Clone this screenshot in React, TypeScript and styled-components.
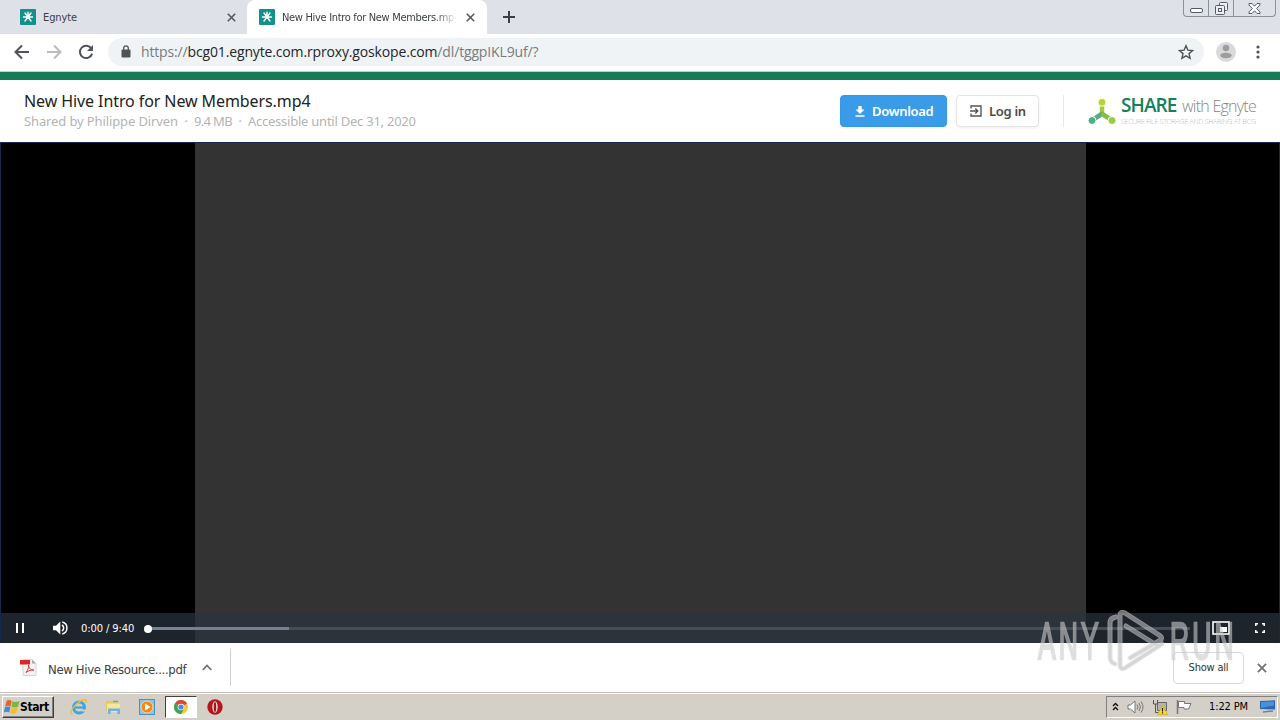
import styled, { createGlobalStyle } from 'styled-components';

const ui = '"DejaVu Sans Condensed", "DejaVu Sans", sans-serif';

function EgnyteIcon() {
  return (
    <svg width="16" height="16" viewBox="0 0 16 16">
      <rect width="16" height="16" rx="1" fill="#12908a" />
      <path
        d="M8 3.200V6M3.500 8h9M5 4l6 8M11 4l-6 8"
        stroke="#fff"
        strokeWidth="1.400"
        strokeLinecap="round"
      />
    </svg>
  );
}

function CloseIcon({ size = 9, color = '#55585c' }: { size?: number; color?: string }) {
  return (
    <svg width={size} height={size} viewBox="0 0 9 9">
      <path d="M.8.8l7.4 7.4M8.2.8L.8 8.2" stroke={color} strokeWidth="1.6" />
    </svg>
  );
}

function TabStrip() {
  return (
    <Strip>
      <Tab>
        <EgnyteIcon />
        <TabTitle $spacing="-0.1px">Egnyte</TabTitle>
        <CloseIcon />
      </Tab>
      <Tab $active>
        <EgnyteIcon />
        <TabTitle $spacing="-0.32px" $faded>
          New Hive Intro for New Members.mp4
        </TabTitle>
        <CloseIcon />
      </Tab>
      <NewTab>
        <svg width="12" height="12" viewBox="0 0 12 12">
          <path d="M6 0v12M0 6h12" stroke="#3c4043" strokeWidth="2" />
        </svg>
      </NewTab>
      <WindowButtons>
        <WindowButton $width={25}>
          <svg width="13" height="5">
            <rect x=".5" y=".5" width="12" height="4" rx="1.5" fill="#fff" stroke="#555b66" />
          </svg>
        </WindowButton>
        <WindowButton $width={25}>
          <svg width="13" height="13" fill="#eef0f3" stroke="#555b66">
            <rect x="4.500" y=".5" width="8" height="8" rx="1" />
            <rect x=".5" y="3.500" width="9" height="9" rx="1" />
            <rect x="3.500" y="6.500" width="3" height="3" />
          </svg>
        </WindowButton>
        <WindowButton $width={41}>
          <svg width="13" height="11" viewBox="0 0 13 11">
            <path
              d="M1 .5h3l2.500 2.700L9 .5h3v1.600L8.600 5.500 12 8.900v1.600H9L6.500 7.800 4 10.500H1V8.900l3.400-3.400L1 2.100z"
              fill="#fff"
              stroke="#555b66"
            />
          </svg>
        </WindowButton>
      </WindowButtons>
    </Strip>
  );
}

function Toolbar() {
  return (
    <ToolbarRow>
      <NavIcons>
        <svg width="16" height="16" viewBox="0 0 16 16" fill="none" stroke="#505357" strokeWidth="2">
          <path d="M15 8H2M8 1.500L1.500 8 8 14.500" />
        </svg>
        <svg width="16" height="16" viewBox="0 0 16 16" fill="none" stroke="#b9bbbe" strokeWidth="2">
          <path d="M1 8h13M8 1.500L14.500 8 8 14.500" />
        </svg>
        <svg width="16" height="16" viewBox="0 0 16 16">
          <path d="M13.400 4.600A6.200 6.200 0 1 0 14.100 9.600" fill="none" stroke="#505357" strokeWidth="2" />
          <path d="M15 1v6H9z" fill="#505357" />
        </svg>
      </NavIcons>
      <AddressBar>
        <svg width="10" height="13" viewBox="0 0 10 13">
          <rect x=".5" y="4.500" width="9" height="8" rx="1" fill="#505357" />
          <path d="M2.700 5V3.200a2.300 2.300 0 0 1 4.600 0V5" fill="none" stroke="#505357" strokeWidth="1.300" />
        </svg>
        <Url>
          https://<b>bcg01.egnyte.com.rproxy.goskope.com</b>/dl/tggpIKL9uf/?
        </Url>
        <svg width="16" height="16" viewBox="0 0 16 16">
          <path
            d="M8 1.700l1.900 4.400 4.700.4-3.600 3.100 1.100 4.700L8 11.800l-4.100 2.500L5 9.600 1.400 6.500l4.700-.4z"
            fill="none"
            stroke="#505357"
            strokeWidth="1.400"
          />
        </svg>
      </AddressBar>
      <svg width="20" height="20" viewBox="0 0 20 20">
        <circle cx="10" cy="10" r="10" fill="#dadada" />
        <circle cx="10" cy="6" r="3.300" fill="#9d9d9d" />
        <ellipse cx="10" cy="13.500" rx="5.700" ry="2.700" fill="#9d9d9d" />
      </svg>
      <svg width="4" height="14" fill="#505357">
        <circle cx="2" cy="2" r="1.600" />
        <circle cx="2" cy="7" r="1.600" />
        <circle cx="2" cy="12" r="1.600" />
      </svg>
    </ToolbarRow>
  );
}

function ShareLogo() {
  return (
    <Logo>
      <svg width="28" height="27" viewBox="0 0 28 27">
        <path d="M14 8v9" stroke="#a5cb45" strokeWidth="4.500" />
        <path d="M14.500 15.500L6 21" stroke="#5eaa77" strokeWidth="4.500" />
        <path d="M13.500 15.500L22 21" stroke="#86bd45" strokeWidth="4.500" />
        <g stroke="#fff">
          <circle cx="14" cy="4.300" r="4" fill="#b9d532" />
          <circle cx="4" cy="22.500" r="4" fill="#4fae88" />
          <circle cx="24" cy="22.500" r="4" fill="#9acb3c" />
        </g>
      </svg>
      <div>
        <LogoName>
          <b>SHARE</b>
          <span>with Egnyte</span>
        </LogoName>
        <LogoTagline>SECURE FILE STORAGE AND SHARING AT BCG</LogoTagline>
      </div>
    </Logo>
  );
}

function FileHeader() {
  return (
    <Header>
      <FileInfo>
        <FileName>New Hive Intro for New Members.mp4</FileName>
        <FileMeta>
          <MetaText $spacing="-0.12px">Shared by Philippe Dirven</MetaText>
          <i>·</i>
          <MetaText $spacing="-0.65px">9.4 MB</MetaText>
          <i>·</i>
          <MetaText $spacing="-0.24px">Accessible until Dec 31, 2020</MetaText>
        </FileMeta>
      </FileInfo>
      <HeaderButton $primary>
        <svg width="10" height="11" viewBox="0 0 10 11" fill="#fff">
          <path d="M3.300 0h3.400v3.500H9.500L5 8 .5 3.500h2.800zM.5 9.300h9v1.400h-9z" />
        </svg>
        Download
      </HeaderButton>
      <HeaderButton>
        <svg width="12" height="12" viewBox="0 0 12 12" fill="none" stroke="#555" strokeWidth="1.400">
          <path d="M1 3.500V1h10v10H1V8.500M0 6h7.500M5.300 3.500L7.800 6 5.300 8.500" />
        </svg>
        Log in
      </HeaderButton>
      <Divider />
      <ShareLogo />
    </Header>
  );
}

function Player() {
  return (
    <Video>
      <Frame />
      <Controls>
        <svg width="8" height="10" fill="#fff">
          <rect width="2" height="10" />
          <rect x="6" width="2" height="10" />
        </svg>
        <svg width="15" height="14" viewBox="0 0 15 14">
          <path d="M0 4.700h3L7.300.5v13L3 9.300H0z" fill="#fff" />
          <path d="M9 4a3.500 3.500 0 0 1 0 6M9.300 1a6.200 6.200 0 0 1 0 12" fill="none" stroke="#fff" strokeWidth="1.500" />
        </svg>
        <Time>0:00 / 9:40</Time>
        <Track>
          <Buffered />
          <Knob />
        </Track>
        <svg width="18" height="14">
          <rect x="1" y="1" width="16" height="12" fill="none" stroke="#fff" strokeWidth="1.600" />
          <rect x="8" y="6" width="7" height="5" fill="#fff" />
        </svg>
        <svg width="10" height="10" fill="none" stroke="#fff" strokeWidth="1.500">
          <path d="M.8 3V.8H3M7 .8h2.200V3M9.200 7v2.200H7M3 9.200H.8V7" />
        </svg>
      </Controls>
    </Video>
  );
}

function DownloadShelf() {
  return (
    <Shelf>
      <ShelfItem>
        <svg width="17" height="17" viewBox="0 0 17 17">
          <path d="M3 .5h9l4 4v12H3z" fill="#f3f3f3" stroke="#d4d4d4" />
          <path d="M12 .5v4h4" fill="#aaa" />
          <rect y="1" width="10" height="4.500" fill="#dc2626" />
          <path d="M6 13.500C8 11 9 8 8.500 6c.5 4 3 5.500 5.500 5-3-.5-5 .5-8 2.500z" fill="none" stroke="#df3b33" />
        </svg>
        <ShelfName>New Hive Resource....pdf</ShelfName>
        <svg width="10" height="7" viewBox="0 0 10 7">
          <path d="M.8 6L5 1.500 9.200 6" fill="none" stroke="#6c6f73" strokeWidth="1.700" />
        </svg>
      </ShelfItem>
      <ShowAll>Show all</ShowAll>
      <CloseIcon size={10} color="#707276" />
    </Shelf>
  );
}

function Taskbar() {
  return (
    <TaskbarRow>
      <StartButton>
        <svg width="16" height="16" viewBox="0 0 16 16">
          <path d="M2.500 2C4 .5 6 1 7.700 2L6.600 7.500C5 6.500 3 6.500 1.200 7.700z" fill="#e8642c" />
          <path d="M8.500 2.300c2 1 4.500.8 7-.3l-1.500 5.800c-2.500 1-4.500 1-6.500 0z" fill="#77b743" />
          <path d="M1 8.300c2-1.200 3.800-1 5.400-.2l-1.200 5.400C3.500 12.500 1.800 12.500-.2 13.700z" fill="#408cd2" />
          <path d="M7.300 8.500c2 1 4.200 1 6.500 0l-1.500 5.700c-2 1-4.300.9-6.200-.1z" fill="#f4be32" />
        </svg>
        Start
      </StartButton>
      <TaskIcon>
        <svg width="18" height="18" viewBox="0 0 18 18">
          <circle cx="9" cy="9.500" r="5.500" fill="none" stroke="#3fa6df" strokeWidth="3" />
          <path d="M5 9.500h10" stroke="#3fa6df" strokeWidth="2.200" />
          <path d="M11.500 11.500h5v2h-5z" fill="#d4d0c8" />
          <path d="M2.500 15.500C-1 17 1 11 6.500 6S18 0 16 5" fill="none" stroke="#e9bd3a" strokeWidth="1.300" />
        </svg>
      </TaskIcon>
      <TaskIcon>
        <svg width="17" height="16" viewBox="0 0 17 16">
          <path d="M1 2h5l1 1.500h8V13H1z" fill="#e7c75b" />
          <path d="M2 4.500h13V13H2z" fill="#f8e59a" />
          <path d="M3 15V9.500h12V15h-2.500v-3h-7v3z" fill="#66b5e3" />
          <path d="M8 2.500h5" stroke="#6fb663" strokeWidth="1.500" />
        </svg>
      </TaskIcon>
      <TaskIcon>
        <svg width="16" height="16" viewBox="0 0 16 16">
          <rect x=".5" y=".5" width="15" height="15" fill="#8ac2e8" stroke="#4b91c7" />
          <circle cx="8" cy="8" r="6" fill="#f08a1d" stroke="#f7d9a8" />
          <path d="M6 4.500L11.500 8 6 11.500z" fill="#fff" />
        </svg>
      </TaskIcon>
      <TaskIcon $active>
        <svg width="14" height="14" viewBox="0 0 14 14">
          <circle cx="7" cy="7" r="7" fill="#f6c730" />
          <path d="M7 7L.9 3.500A7 7 0 0 1 13.100 3.500z" fill="#dc4638" />
          <path d="M.9 3.500A7 7 0 0 0 7 14l3-5.300L7 7z" fill="#38a557" />
          <circle cx="7" cy="7" r="3.300" fill="#fff" />
          <circle cx="7" cy="7" r="2.600" fill="#4587ed" />
        </svg>
      </TaskIcon>
      <TaskIcon>
        <svg width="16" height="16" viewBox="0 0 16 16">
          <circle cx="8" cy="8" r="7.700" fill="#b5161b" />
          <ellipse cx="8" cy="8" rx="2.700" ry="5.800" fill="#f3dcdc" />
          <ellipse cx="8" cy="8" rx="1.200" ry="5" fill="#a11418" />
        </svg>
      </TaskIcon>
      <Tray>
        <svg width="7" height="9" fill="none" stroke="#111" strokeWidth="1.400">
          <path d="M1 4l2.500-2.500L6 4M1 8l2.500-2.500L6 8" />
        </svg>
        <svg width="17" height="14" viewBox="0 0 17 14" fill="none" stroke="#777">
          <path d="M1 5h2.500L8 1v12L3.500 9H1z" fill="#fff" />
          <path d="M10 4.500q2 2.500 0 5M12 3q3 4 0 8M14 1.500q4 5.500 0 11" />
        </svg>
        <svg width="16" height="16" viewBox="0 0 16 16">
          <path d="M5.500 3.500h9v8h-9z" fill="#b4b4b0" stroke="#666" />
          <path d="M1.500 1v4h4V1M3.500 5v8.500h4" fill="none" stroke="#555" />
          <path d="M10.500 6.500l5 9h-10z" fill="#f7dc25" stroke="#c3a30f" strokeWidth=".6" />
          <path d="M10.500 9v3.500M10.500 13.300v1.200" stroke="#222" strokeWidth="1.200" />
        </svg>
        <svg width="16" height="14" viewBox="0 0 16 14">
          <path d="M1.500 0v14" stroke="#777" strokeWidth="1.500" />
          <path d="M2.500 1.500h6v2h6.500L12.500 9H8V7.500H2.500z" fill="#fff" stroke="#777" />
        </svg>
        <Clock>1:22 PM</Clock>
        <svg width="16" height="13" viewBox="0 0 16 13">
          <path d="M0 1l15-.7v9.200L0 9z" fill="#2868b4" />
          <path d="M1 2l13-.6v4L1 8z" fill="#4b91d5" />
          <path d="M3 12l10-1" stroke="#5c87b4" strokeWidth="1.500" />
        </svg>
      </Tray>
    </TaskbarRow>
  );
}

function Watermark() {
  return (
    <WatermarkLayer>
      <WatermarkWord>ANY</WatermarkWord>
      <svg width="62" height="62" viewBox="0 0 62 62" fill="none" strokeLinecap="round" strokeLinejoin="round">
        <g stroke="#d9d9d9" strokeWidth="5">
          <path d="M10 7Q4 8 4 13v34q0 5 5 7" />
          <path d="M14 49V6q0-5 5-3l34 22q5 3 0 6L24 48" />
          <path d="M20 16l32 20M14 49v7q1 4 5 2l37-24" />
        </g>
        <g stroke="#bbb" strokeWidth="3">
          <path d="M10 7Q4 8 4 13v34q0 5 5 7" />
          <path d="M14 49V6q0-5 5-3l34 22q5 3 0 6L24 48" />
          <path d="M20 16l32 20M14 49v7q1 4 5 2l37-24" />
        </g>
      </svg>
      <WatermarkWord>RUN</WatermarkWord>
    </WatermarkLayer>
  );
}

export default function App() {
  return (
    <Screen>
      <GlobalStyle />
      <TabStrip />
      <Toolbar />
      <FileHeader />
      <Player />
      <DownloadShelf />
      <Taskbar />
      <Watermark />
    </Screen>
  );
}

const GlobalStyle = createGlobalStyle`
  * {
    box-sizing: border-box;
  }

  body {
    margin: 0;
    overflow: hidden;
  }

  svg {
    display: block;
    flex: none;
  }
`;

const Screen = styled.div`
  position: relative;
  display: flex;
  flex-direction: column;
  width: 1280px;
  height: 720px;
  background: #fff;
  font-family: ${ui};
  white-space: nowrap;
`;

const Strip = styled.div`
  display: flex;
  height: 34px;
  background: #dee1e7;
`;

const Tab = styled.div<{ $active?: boolean }>`
  display: flex;
  align-items: center;
  width: ${(p) => (p.$active ? 240 : 247)}px;
  padding: 0 ${(p) => (p.$active ? '12px 0 12px' : '11px 0 20px')};
  border-radius: 8px 8px 0 0;
  background: ${(p) => (p.$active ? '#fff' : 'transparent')};
`;

const TabTitle = styled.span<{ $spacing: string; $faded?: boolean }>`
  flex: 1;
  overflow: hidden;
  margin: 0 9px 0 7px;
  color: #3c4043;
  font-size: 11px;
  letter-spacing: ${(p) => p.$spacing};
  ${(p) => p.$faded && 'mask-image: linear-gradient(90deg, #000 88%, transparent);'}
`;

const NewTab = styled.div`
  display: flex;
  align-items: center;
  padding-left: 16px;
`;

const WindowButtons = styled.div`
  display: flex;
  height: 17px;
  margin: 0 4px 0 auto;
  border: 1px solid #8b909a;
  border-top: 0;
  border-radius: 0 0 4px 4px;
`;

const WindowButton = styled.div<{ $width: number }>`
  display: flex;
  align-items: center;
  justify-content: center;
  width: ${(p) => p.$width}px;

  &:not(:last-child) {
    border-right: 1px solid #8b909a;
  }

  &:first-child {
    align-items: flex-end;
    padding-bottom: 3px;
  }
`;

const ToolbarRow = styled.div`
  display: flex;
  align-items: center;
  height: 38px;
  padding: 0 20px 2px 14px;
  border-bottom: 1px solid #c9cccf;

  > svg:last-child {
    margin-left: 20px;
  }
`;

const NavIcons = styled.div`
  display: flex;
  gap: 16px;
  margin-right: 14px;
`;

const AddressBar = styled.div`
  display: flex;
  flex: 1;
  align-items: center;
  height: 28px;
  margin-right: 12px;
  padding: 0 10px 0 13px;
  border-radius: 14px;
  background: #f0f3f5;
`;

const Url = styled.div`
  flex: 1;
  margin-left: 10px;
  color: #777b80;
  font-family: 'Open Sans', sans-serif;
  font-size: 14px;
  letter-spacing: -0.15px;

  b {
    color: #22252a;
    font-weight: 400;
  }
`;

const Header = styled.header`
  display: flex;
  align-items: center;
  height: 70px;
  padding: 0 23px 0 24px;
  border-top: 8px solid #177b57;
`;

const FileInfo = styled.div`
  flex: 1;
  padding-bottom: 2px;
  font-family: 'Noto Sans', sans-serif;
`;

const FileName = styled.div`
  color: #222;
  font-size: 16px;
  line-height: 22px;
  letter-spacing: -0.09px;
`;

const FileMeta = styled.div`
  display: flex;
  color: #b3b3b3;
  font-size: 13px;
  line-height: 18px;

  i {
    width: 16px;
    text-align: center;
  }
`;

const MetaText = styled.span<{ $spacing: string }>`
  letter-spacing: ${(p) => p.$spacing};
`;

const HeaderButton = styled.button<{ $primary?: boolean }>`
  display: flex;
  align-items: center;
  gap: 7px;
  width: ${(p) => (p.$primary ? 107 : 83)}px;
  height: 32px;
  margin-right: ${(p) => (p.$primary ? 9 : 24)}px;
  padding: 0 0 0 ${(p) => (p.$primary ? 14 : 13)}px;
  border: 1px solid ${(p) => (p.$primary ? '#3597e5' : '#e4e4e4')};
  border-radius: 4px;
  background: ${(p) => (p.$primary ? '#3a9be8' : '#fff')};
  box-shadow: 0 1px 3px rgba(0, 0, 0, 0.07);
  color: ${(p) => (p.$primary ? '#fff' : '#4b4b4b')};
  font: 600 13px 'Noto Sans', sans-serif;
  letter-spacing: -0.3px;
`;

const Divider = styled.div`
  width: 1px;
  height: 32px;
  margin-right: 24px;
  background: #e9e9e9;
`;

const Logo = styled.div`
  display: flex;
  align-items: center;
  gap: 5px;
  width: 169px;
`;

const LogoName = styled.div`
  display: flex;
  align-items: baseline;
  gap: 4px;
  font-family: 'Open Sans', sans-serif;
  font-size: 19px;
  line-height: 18px;

  b {
    width: 57px;
    color: #16805c;
    font-weight: 600;
    letter-spacing: -0.9px;
  }

  span {
    color: #858585;
    font-size: 16px;
    font-weight: 300;
    letter-spacing: -0.75px;
  }
`;

const LogoTagline = styled.div`
  margin-top: 2px;
  color: #b8b8b8;
  font: 300 7px/9px 'Open Sans', sans-serif;
  letter-spacing: -0.24px;
`;

const Video = styled.div`
  position: relative;
  height: 501px;
  border: 1px solid #15294d;
  border-bottom: 0;
  background: #000;
`;

const Frame = styled.div`
  width: 891px;
  height: 100%;
  margin-left: 194px;
  background: #333;
`;

const Controls = styled.div`
  position: absolute;
  right: 0;
  bottom: 0;
  left: 0;
  display: flex;
  align-items: center;
  height: 30px;
  padding: 0 14px 0 15px;
  background: rgba(43, 51, 63, 0.7);

  > svg:nth-child(2) {
    margin-left: 29px;
  }

  > svg:last-child {
    margin-left: 25px;
  }
`;

const Time = styled.span`
  width: 53px;
  margin: 0 14px 0 13px;
  color: #fff;
  font: 10px 'DejaVu Sans', sans-serif;
  letter-spacing: -0.12px;
`;

const Track = styled.div`
  position: relative;
  flex: 1;
  height: 3px;
  margin-right: 22px;
  background: #454d59;
`;

const Buffered = styled.div`
  width: 141px;
  height: 3px;
  background: #738294;
`;

const Knob = styled.div`
  position: absolute;
  top: -2px;
  left: -4px;
  width: 8px;
  height: 8px;
  border-radius: 50%;
  background: #fff;
`;

const Shelf = styled.div`
  display: flex;
  align-items: center;
  height: 49px;
  padding-right: 13px;
`;

const ShelfItem = styled.div`
  display: flex;
  align-items: center;
  width: 231px;
  height: 37px;
  margin-right: auto;
  padding-left: 20px;
  border-right: 1px solid #cfcfcf;
`;

const ShelfName = styled.span`
  width: 139px;
  margin: 3px 15px 0 11px;
  color: #3c4043;
  font-size: 13px;
  letter-spacing: -0.34px;
`;

const ShowAll = styled.button`
  width: 71px;
  height: 32px;
  margin-right: 13px;
  padding: 0;
  border: 1px solid #d6d8db;
  border-radius: 4px;
  background: #fff;
  color: #333;
  font: 11px ${ui};
  letter-spacing: -0.2px;
`;

const TaskbarRow = styled.div`
  display: flex;
  align-items: center;
  height: 28px;
  padding: 1px 2px 1px;
  border-top: 1px solid #c5c1ba;
  background: #d4d0c8;
  box-shadow: inset 0 1px #fff;
`;

const StartButton = styled.button`
  display: flex;
  align-items: center;
  width: 52px;
  height: 22px;
  margin-right: 8px;
  padding: 0 0 0 1px;
  border: 1px solid;
  border-color: #fff #404040 #404040 #fff;
  background: #d4d0c8;
  box-shadow: inset -1px -1px #808080;
  color: #000;
  font: bold 12px ${ui};
  letter-spacing: -0.4px;
`;

const TaskIcon = styled.div<{ $active?: boolean }>`
  display: flex;
  align-items: center;
  justify-content: center;
  width: ${(p) => (p.$active ? 32 : 34)}px;
  height: 22px;
  margin: 0 ${(p) => (p.$active ? 1 : 0)}px;
  border: ${(p) => (p.$active ? '1px solid' : '0')};
  border-color: #404040 #fff #fff #404040;
  background: ${(p) => (p.$active ? '#fff' : 'transparent')};
`;

const Tray = styled.div`
  display: flex;
  align-items: center;
  gap: 8px;
  width: 172px;
  height: 22px;
  margin-left: auto;
  padding: 0 1px 0 5px;
  border: 1px solid;
  border-color: #808080 #fff #fff #808080;
`;

const Clock = styled.span`
  margin: 0 auto;
  padding-left: 5px;
  color: #000;
  font-size: 11px;
  letter-spacing: -0.15px;
`;

const WatermarkLayer = styled.div`
  position: absolute;
  top: 610px;
  left: 1038px;
  display: flex;
  align-items: center;
  gap: 4px;
  opacity: 0.6;
  pointer-events: none;
`;

const WatermarkWord = styled.span`
  width: 64px;
  color: #c8c8c8;
  font: 52px/30px 'Liberation Sans', sans-serif;
  letter-spacing: 6px;
  transform: scaleX(0.51);
  transform-origin: left;
  -webkit-text-stroke: 2.5px #ccc;

  &:last-child {
    margin-left: -2px;
  }
`;
